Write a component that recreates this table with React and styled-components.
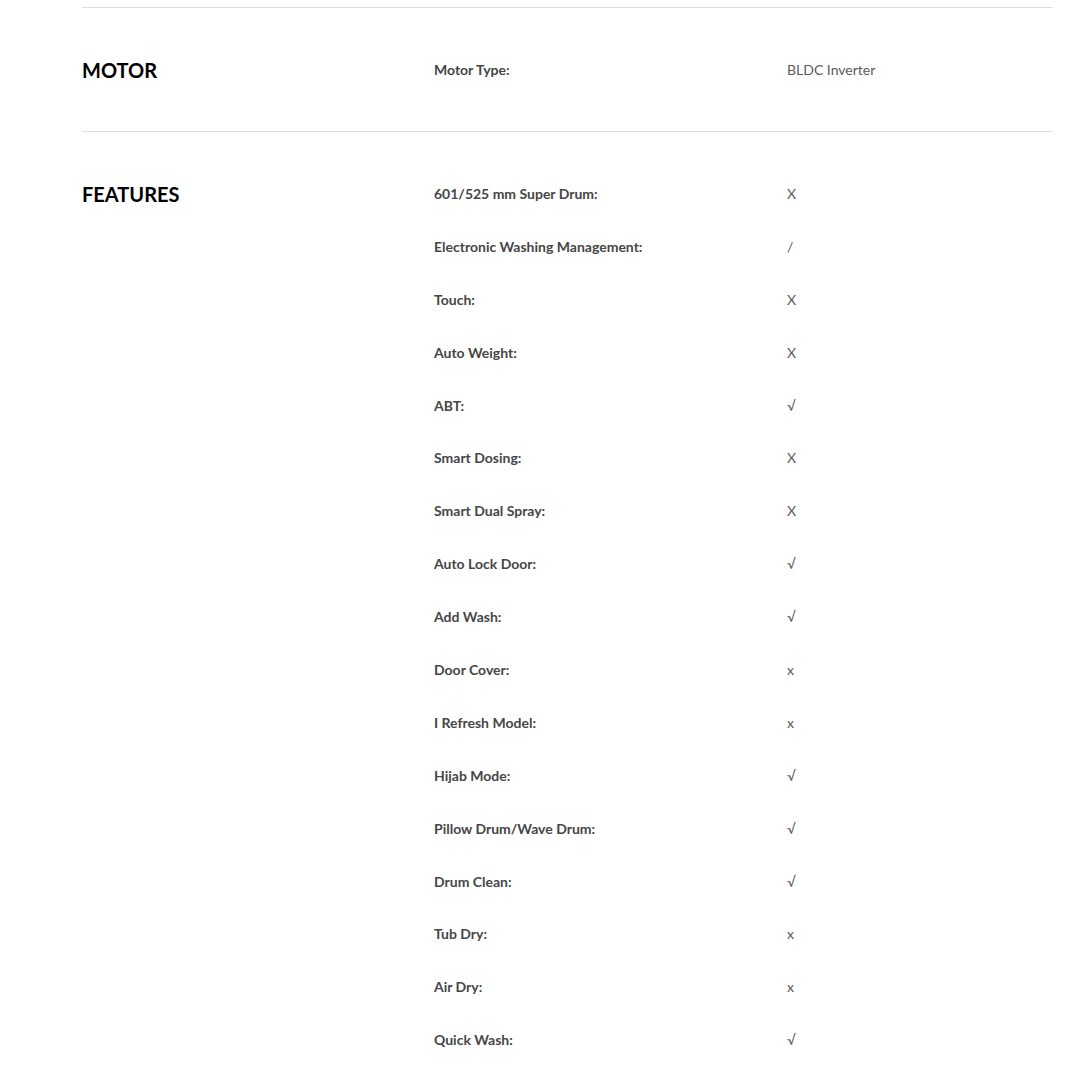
import React from "react";
import styled, { createGlobalStyle } from "styled-components";

const GlobalStyle = createGlobalStyle`
  body {
    margin: 0;
    background: #fff;
    font-family: Lato, "Open Sans", sans-serif;
  }
`;

const Page = styled.div`
  padding: 7px 27px 0 82px;
`;

const Section = styled.section`
  display: grid;
  grid-template-columns: 352px 353px 1fr;
  border-top: 1px solid #dcdfe3;
  padding: 35px 0;
`;

const Heading = styled.h2`
  margin: 0;
  height: 53px;
  display: flex;
  align-items: center;
  font-family: Lato, sans-serif;
  font-size: 20px;
  font-weight: 700;
  color: #000;
`;

const Rows = styled.dl`
  grid-column: 2 / 4;
  display: grid;
  grid-template-columns: 353px 1fr;
  grid-auto-rows: 52.9px;
  margin: 0;
`;

const Label = styled.dt`
  display: flex;
  align-items: center;
  font-size: 14px;
  font-weight: 700;
  color: #464646;
`;

const Value = styled.dd`
  margin: 0;
  display: flex;
  align-items: center;
  font-size: 14px;
  font-weight: 400;
  color: #5a5a5a;
`;

const sections = [
  { title: "MOTOR", rows: [["Motor Type:", "BLDC Inverter"]] },
  {
    title: "FEATURES",
    rows: [
      ["601/525 mm Super Drum:", "X"],
      ["Electronic Washing Management:", "/"],
      ["Touch:", "X"],
      ["Auto Weight:", "X"],
      ["ABT:", "√"],
      ["Smart Dosing:", "X"],
      ["Smart Dual Spray:", "X"],
      ["Auto Lock Door:", "√"],
      ["Add Wash:", "√"],
      ["Door Cover:", "x"],
      ["I Refresh Model:", "x"],
      ["Hijab Mode:", "√"],
      ["Pillow Drum/Wave Drum:", "√"],
      ["Drum Clean:", "√"],
      ["Tub Dry:", "x"],
      ["Air Dry:", "x"],
      ["Quick Wash:", "√"],
    ],
  },
];

export default function App() {
  return (
    <>
      <GlobalStyle />
      <Page>
        {sections.map((s) => (
          <Section key={s.title}>
            <Heading>{s.title}</Heading>
            <Rows>
              {s.rows.map(([label, value]) => (
                <React.Fragment key={label}>
                  <Label>{label}</Label>
                  <Value>{value}</Value>
                </React.Fragment>
              ))}
            </Rows>
          </Section>
        ))}
      </Page>
    </>
  );
}
